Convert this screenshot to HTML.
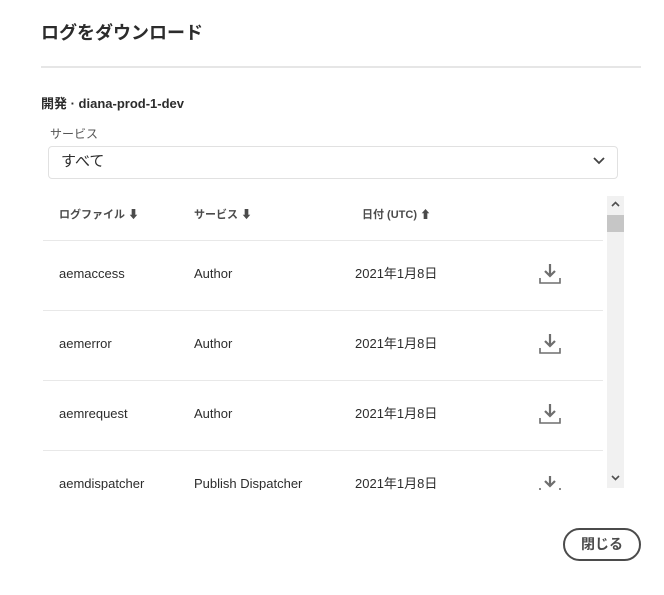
<!DOCTYPE html>
<html><head><meta charset="utf-8"><style>
*{box-sizing:border-box;margin:0;padding:0}
body{width:664px;height:595px;background:#fff;font-family:"Liberation Sans","Noto Sans CJK JP",sans-serif;color:#2c2c2c;position:relative;overflow:hidden}
.a{position:absolute;white-space:nowrap;line-height:16px}
.h{font-size:11px;color:#4b4b4b;font-weight:bold}
.c{font-size:13px;color:#2c2c2c}
.line{position:absolute;left:43px;width:560px;height:1px;background:#e8e8e8}
</style></head><body>
<div class="a" style="left:41px;top:22px;font-size:18px;line-height:22px;font-weight:bold">ログをダウンロード</div>
<div style="position:absolute;left:41px;top:66px;width:600px;height:2px;background:#e6e6e6"></div>
<div class="a" style="left:41px;top:96px;font-size:13px;font-weight:bold">開発 · diana-prod-1-dev</div>
<div class="a" style="left:50px;top:126px;font-size:12px;color:#555">サービス</div>
<div style="position:absolute;left:48px;top:146px;width:570px;height:33px;border:1px solid #e1e1e1;border-radius:4px"></div>
<div class="a" style="left:61px;top:153px;font-size:15px;line-height:18px">すべて</div>
<svg class="a" style="left:592px;top:156px" width="14" height="10" viewBox="0 0 14 10"><path d="M2 2l5 5 5-5" stroke="#444" stroke-width="1.8" fill="none"/></svg>
<div class="a h" style="left:59px;top:207px">ログファイル ⬇</div>
<div class="a h" style="left:194px;top:207px">サービス ⬇</div>
<div class="a h" style="left:362px;top:207px">日付 (UTC) ⬆</div>
<div class="line" style="top:240px"></div>
<div class="line" style="top:310px"></div>
<div class="line" style="top:380px"></div>
<div class="line" style="top:450px"></div>
<div class="a c" style="left:59px;top:266px">aemaccess</div><div class="a c" style="left:194px;top:266px">Author</div><div class="a c" style="left:355px;top:266px">2021年1月8日</div>
<div class="a c" style="left:59px;top:336px">aemerror</div><div class="a c" style="left:194px;top:336px">Author</div><div class="a c" style="left:355px;top:336px">2021年1月8日</div>
<div class="a c" style="left:59px;top:406px">aemrequest</div><div class="a c" style="left:194px;top:406px">Author</div><div class="a c" style="left:355px;top:406px">2021年1月8日</div>
<div style="position:absolute;left:0;top:476px;width:607px;height:14px;overflow:hidden">
<div class="a c" style="left:59px;top:0">aemdispatcher</div><div class="a c" style="left:194px;top:0">Publish Dispatcher</div><div class="a c" style="left:355px;top:0">2021年1月8日</div>
<svg class="a" style="left:538px;top:-4px" width="24" height="24" viewBox="0 0 24 24"><path d="M12 2v11M7 9l5 5 5-5" stroke="#6e6e6e" stroke-width="2.2" fill="none"/><path d="M2 16v5h20v-5" stroke="#6e6e6e" stroke-width="1.6" fill="none"/></svg>
</div>
<svg class="a" style="left:538px;top:262px" width="24" height="24" viewBox="0 0 24 24"><path d="M12 2v11M7 9l5 5 5-5" stroke="#6e6e6e" stroke-width="2.2" fill="none"/><path d="M2 16v5h20v-5" stroke="#6e6e6e" stroke-width="1.6" fill="none"/></svg>
<svg class="a" style="left:538px;top:332px" width="24" height="24" viewBox="0 0 24 24"><path d="M12 2v11M7 9l5 5 5-5" stroke="#6e6e6e" stroke-width="2.2" fill="none"/><path d="M2 16v5h20v-5" stroke="#6e6e6e" stroke-width="1.6" fill="none"/></svg>
<svg class="a" style="left:538px;top:402px" width="24" height="24" viewBox="0 0 24 24"><path d="M12 2v11M7 9l5 5 5-5" stroke="#6e6e6e" stroke-width="2.2" fill="none"/><path d="M2 16v5h20v-5" stroke="#6e6e6e" stroke-width="1.6" fill="none"/></svg>
<div style="position:absolute;left:607px;top:196px;width:17px;height:292px;background:#f1f1f1"></div>
<div style="position:absolute;left:607px;top:215px;width:17px;height:17px;background:#c6c6c6"></div>
<svg class="a" style="left:611px;top:201px" width="9" height="6" viewBox="0 0 9 6"><path d="M1 5l3.5-3.5L8 5" stroke="#505050" stroke-width="1.6" fill="none"/></svg>
<svg class="a" style="left:611px;top:475px" width="9" height="6" viewBox="0 0 9 6"><path d="M1 1l3.5 3.5L8 1" stroke="#505050" stroke-width="1.6" fill="none"/></svg>
<div style="position:absolute;left:563px;top:528px;width:78px;height:33px;border:2px solid #4b4b4b;border-radius:17px;text-align:center;line-height:29px;font-size:14px;font-weight:bold;color:#4b4b4b">閉じる</div>
</body></html>
